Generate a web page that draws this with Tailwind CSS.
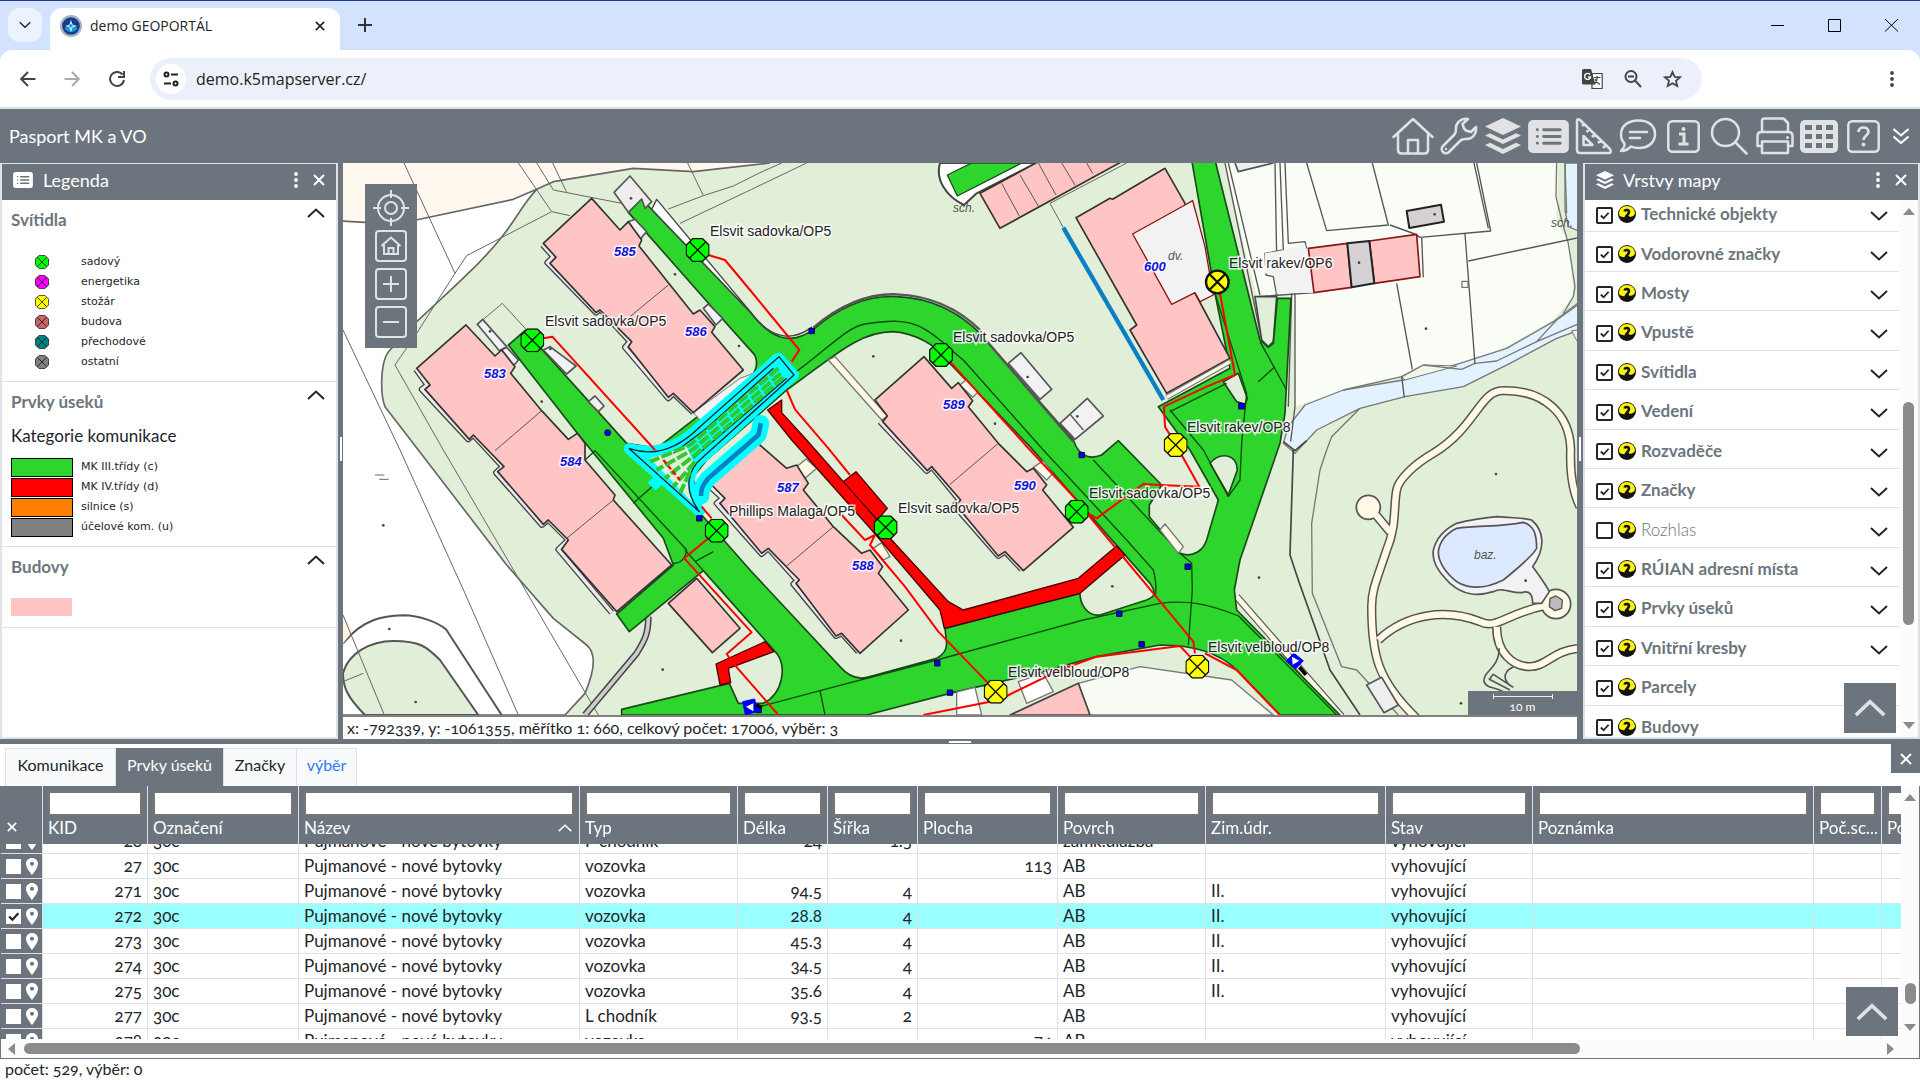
<!DOCTYPE html>
<html lang="cs">
<head>
<meta charset="utf-8">
<title>demo GEOPORTÁL</title>
<script src="https://cdn.jsdelivr.net/npm/@tailwindcss/browser@4"></script>
</head>
<body class="flex h-screen flex-col overflow-hidden bg-white font-['Lato',sans-serif] text-[17px] leading-6 text-[#212529] [font-variant-numeric:oldstyle-nums]">

<!-- Shared symbols -->
<svg class="hidden" aria-hidden="true">
  <symbol id="up" viewBox="0 0 18 10"><path d="M1 9 9 1.500 17 9" fill="none" stroke="currentColor" stroke-width="2"/></symbol>
  <symbol id="down" viewBox="0 0 18 10"><path d="M1 1 9 8.500 17 1" fill="none" stroke="currentColor" stroke-width="2"/></symbol>
  <symbol id="close" viewBox="0 0 12 12"><path d="m1 1 10 10M11 1 1 11" fill="none" stroke="currentColor" stroke-width="2"/></symbol>
  <symbol id="dots" viewBox="0 0 4 16"><g fill="currentColor"><circle cx="2" cy="2" r="1.900"/><circle cx="2" cy="8" r="1.900"/><circle cx="2" cy="14" r="1.900"/></g></symbol>
  <symbol id="layers" viewBox="0 0 36 36"><g fill="currentColor"><path d="M18 0 36 8.500 18 17 0 8.500z"/><path d="m0 17.500 5-2.300 13 6.200 13-6.200 5 2.300L18 26z"/><path d="m0 27 5-2.300 13 6.200 13-6.200 5 2.300L18 36z"/></g></symbol>
  <symbol id="list" viewBox="0 0 42 34"><rect width="42" height="34" rx="5" fill="currentColor"/><g stroke="#6c757d" stroke-width="3" stroke-linecap="round"><path d="M16 10h17M16 17h17M16 24h17M9.500 10h.1M9.500 17h.1M9.500 24h.1"/></g></symbol>
  <symbol id="tick" viewBox="0 0 12 12"><path d="m2 6 3 3 5.500-6" fill="none" stroke="currentColor" stroke-width="2"/></symbol>
  <symbol id="bulb" viewBox="0 0 18 18"><circle cx="9" cy="9" r="9" fill="#111"/><path d="M1 9C1 4 4.500 1 9 1s8 3 8 7.500c-1 3-3.500 3-5.500 3.500L9 13.500 5 12C3 12 1 11 1 9z" fill="#fcf40a"/><path d="M6.500 6.500C7 4.500 11 4.500 11 7c0 2.500-3 3-3.500 6l4-1" fill="none" stroke="#111" stroke-width="2.600"/></symbol>
  <symbol id="pin" viewBox="0 0 12 17"><path fill="#fff" fill-rule="evenodd" d="M6 0C2.500 0 0 2.500 0 6c0 4 6 11 6 11s6-7 6-11c0-3.500-2.500-6-6-6zm0 3.800a2 2 0 1 1 0 4 2 2 0 0 1 0-4z"/></symbol>
  <symbol id="lamp" viewBox="-36 -36 72 72"><path d="M-15-34H15L34-15V15L15 34H-15L-34 15V-15z" stroke="#111" stroke-width="4"/><path d="m-24-24 48 48M24-24l-48 48" fill="none" stroke="#111" stroke-width="4"/></symbol>
</svg>

<!-- Browser chrome -->
<header class="shrink-0 bg-[#d3e3fd] font-['Open_Sans',sans-serif] [font-variant-numeric:lining-nums]">
  <div class="flex h-[50px] items-end border-t border-[#1f3a93]">
    <button aria-label="Hledat karty" class="mb-2 ml-2 grid h-[34px] w-[34px] place-items-center rounded-xl bg-[#ecf2fe]"><svg class="h-2 w-3"><use href="#down"/></svg></button>
    <div class="ml-2 flex h-[42px] w-[290px] items-center rounded-t-xl bg-white px-3 pb-[6px]">
      <svg class="ml-[-2px] h-[22px] w-[22px]" viewBox="0 0 20 20"><circle cx="10" cy="10" r="9" fill="#123f8c" stroke="#aab3bd" stroke-width="2"/><path d="M4 12a7 7 0 0 0 12 0l-5-3z" fill="#179cd8"/><path d="m10 6 1 3 3 1-3 1-1 3-1-3-3-1 3-1z" fill="none" stroke="#cdeaff"/></svg>
      <span class="ml-2 flex-1 text-sm">demo GEOPORTÁL</span>
      <button aria-label="Zavřít kartu"><svg class="h-[10px] w-[10px]"><use href="#close"/></svg></button>
      <span class="w-[3px]"></span>
    </div>
    <button aria-label="Nová karta" class="mb-[18px] ml-[18px] text-[#333]"><svg class="h-[14px] w-[14px]" viewBox="0 0 14 14"><path d="M7 0v14M0 7h14" stroke="currentColor" stroke-width="2"/></svg></button>
    <div class="mb-[18px] ml-auto mr-[22px] flex items-center gap-11 text-black">
      <button aria-label="Minimalizovat"><svg class="h-[14px] w-[13px]" viewBox="0 0 13 14"><path d="M0 7.500h13" stroke="currentColor"/></svg></button>
      <button aria-label="Maximalizovat"><svg class="h-[14px] w-[13px]" viewBox="0 0 13 14"><path d="M.5 1.500h12v12H.5z" fill="none" stroke="currentColor"/></svg></button>
      <button aria-label="Zavřít"><svg class="h-[14px] w-[13px]" viewBox="0 0 13 14"><path d="m0 1 13 12.500M13 1 0 13.500" fill="none" stroke="currentColor"/></svg></button>
    </div>
  </div>
  <div class="flex h-[59px] items-center rounded-t-xl border-b-2 border-[#dde1dd] bg-white text-[#444]">
    <button aria-label="Zpět" class="ml-5"><svg class="h-4 w-4" viewBox="0 0 16 16"><path d="M15.500 8H1.500M8 1 1.200 8 8 15" fill="none" stroke="currentColor" stroke-width="2"/></svg></button>
    <button aria-label="Vpřed" class="ml-7 text-[#aaa]"><svg class="h-4 w-4" viewBox="0 0 16 16"><path d="M.5 8h14M8 1l6.800 7L8 15" fill="none" stroke="currentColor" stroke-width="2"/></svg></button>
    <button aria-label="Obnovit" class="ml-[29px]"><svg class="h-4 w-4" viewBox="0 0 16 16"><path d="M13.500 3.500A7 7 0 1 0 15 9M15 0v6H9" fill="none" stroke="currentColor" stroke-width="2"/></svg></button>
    <div class="ml-[25px] mr-[218px] flex h-[42px] flex-1 items-center rounded-full bg-[#ecf0fa]">
      <span class="ml-[6px] grid h-[30px] w-[30px] place-items-center rounded-full bg-white"><svg class="h-4 w-4" viewBox="0 0 16 16"><g fill="none" stroke="#222" stroke-width="2"><circle cx="3.500" cy="3.500" r="2"/><circle cx="12.500" cy="12.500" r="2"/><path d="M8 3.500h7M1 12.500h7"/></g></svg></span>
      <input aria-label="Adresa" value="demo.k5mapserver.cz/" class="ml-[10px] min-w-0 flex-1 bg-transparent text-base text-[#222] outline-none [font-variant-numeric:lining-nums]">
      <div class="mr-5 flex items-center gap-[21px]">
        <button aria-label="Přeložit"><svg class="h-5 w-[21px]" viewBox="0 0 21 20"><path d="M10 4.500h10.200v15H10z" fill="#fff" stroke="#444" stroke-width="1.200"/><path d="M1.500 0H9l4.500 15.500h-12A1.500 1.500 0 0 1 0 14V1.500A1.500 1.500 0 0 1 1.500 0z" fill="#444"/><path d="M8 5.500A3 3 0 1 0 8.600 8H6" fill="none" stroke="#fff" stroke-width="1.400"/><path d="M12 8.500h6.500M15.300 7v1.500c0 3-1.500 5-3 6.500M13 10c1 3 3 4.500 5 5.500" fill="none" stroke="#444" stroke-width="1.200"/></svg></button>
        <button aria-label="Lupa"><svg class="h-[18px] w-[18px]" viewBox="0 0 18 18"><g fill="none" stroke="#444" stroke-width="2"><circle cx="7" cy="6.500" r="5.500"/><path d="m11 10.500 6 6.500M4 6.500h6"/></g></svg></button>
        <button aria-label="Záložka"><svg class="h-[18px] w-[19px]" viewBox="0 0 19 18"><path d="m9.500 2 2.200 4.800 5.300.5-4 3.500 1.200 5.200-4.700-2.800L4.800 16 6 10.800 2 7.300l5.300-.5z" fill="none" stroke="#444" stroke-width="1.800"/></svg></button>
      </div>
    </div>
    <button aria-label="Nabídka" class="absolute right-[26px]"><svg class="h-[18px] w-1"><use href="#dots"/></svg></button>
  </div>
</header>

<!-- Application bar -->
<nav class="flex h-[54px] shrink-0 items-center bg-[#6c757d] pr-[11px] text-[#e0e2e4]">
  <h1 class="ml-[9px] flex-1 text-lg text-white">Pasport MK a VO</h1>
  <div class="flex items-center gap-[6px]">
    <button aria-label="Domů"><svg class="h-[38px] w-[42px]" viewBox="0 0 42 38"><g fill="none" stroke="currentColor" stroke-width="2.500" stroke-linejoin="round" stroke-linecap="round"><path d="M1.500 20 21 2l19.500 18M6 17v16q0 3.500 3.500 3.500h23q3.500 0 3.500-3.500V17"/><path d="M16 36V23h10v13"/></g></svg></button>
    <button aria-label="Nástroje"><svg class="h-[38px] w-[38px]" viewBox="0 0 38 38"><path d="M28 2c-7-1-13 4-12 11 0 2 0 3-2 5L3 29c-4 4 2 10 6 6l11-11c2-2 3-2 5-2 7 1 12-5 11-12l-5 5-5-1.500-2-2L22.500 7z" fill="none" stroke="currentColor" stroke-width="2.500" stroke-linejoin="round"/><circle cx="6" cy="32" r="1.200" fill="currentColor"/></svg></button>
    <button aria-label="Vrstvy"><svg class="h-9 w-[38px]"><use href="#layers"/></svg></button>
    <button aria-label="Legenda"><svg class="h-[33px] w-[41px]"><use href="#list"/></svg></button>
    <button aria-label="Měření"><svg class="h-[38px] w-[38px]" viewBox="0 0 38 38"><g fill="none" stroke="currentColor" stroke-width="2.500" stroke-linejoin="round"><path d="M2 4q0-3 3-1l30 29q2 4-1 4H5q-3 0-3-3zM8.500 19v9h9zM9 7 7 9M14.500 12l-3 3M20 17l-3 3M26 23l-3 3M31 28l-3 3"/></g></svg></button>
    <button aria-label="Komentáře"><svg class="h-[34px] w-[38px]" viewBox="0 0 38 34"><path d="M19.500 1.500C30 1.500 36 7 36 15s-6 14-16 14c-3 0-6-.500-8-1.500-3 3-6 4.500-10 4.500 2-2 4-5 3.500-7.500C3 22 2 19 2 15.500 2 7 9 1.500 19.500 1.500zM11 13h17M11 19h10" fill="none" stroke="currentColor" stroke-width="2.500" stroke-linejoin="round" stroke-linecap="round"/></svg></button>
    <button aria-label="Informace" class="mx-1"><svg class="h-[33px] w-[33px]" viewBox="0 0 33 33"><rect x="1.300" y="1.300" width="30.400" height="30.400" rx="4" fill="none" stroke="currentColor" stroke-width="2.500"/><path d="M12 14h5v9M11.500 24h10" fill="none" stroke="currentColor" stroke-width="3"/><circle cx="16.500" cy="9" r="2" fill="currentColor"/></svg></button>
    <button aria-label="Hledat" class="mr-[2px]"><svg class="h-[38px] w-[38px]" viewBox="0 0 38 38"><g fill="none" stroke="currentColor" stroke-width="2.500" stroke-linecap="round"><circle cx="15.500" cy="15.500" r="13.500"/><path d="m25.500 25.500 11 11"/></g></svg></button>
    <button aria-label="Tisk"><svg class="h-[38px] w-[38px]" viewBox="0 0 38 38"><g fill="none" stroke="currentColor" stroke-width="2.500" stroke-linejoin="round"><path d="M6 15V4q0-2.500 2.500-2.500h19L32 6v9M6 29H1.500V19q0-4 4-4h27q4 0 4 4v10H32M6 24.500h26V36H6z"/></g><circle cx="31.500" cy="20.500" r="1.500" fill="currentColor"/></svg></button>
    <button aria-label="Tabulka"><svg class="h-[33px] w-[38px]" viewBox="0 0 38 33"><rect width="38" height="33" rx="5" fill="currentColor"/><g fill="#6c757d"><path d="M5 5h7v5H5zM16 5h6v5h-6zM26 5h7v5h-7zM5 14h7v5H5zM16 14h6v5h-6zM26 14h7v5h-7zM5 23h7v5H5zM16 23h6v5h-6zM26 23h7v5h-7z"/></g></svg></button>
    <button aria-label="Nápověda" class="ml-[3px] mr-[7px]"><svg class="h-[33px] w-[33px]" viewBox="0 0 33 33"><rect x="1.300" y="1.300" width="30.400" height="30.400" rx="4" fill="none" stroke="currentColor" stroke-width="2.500"/><path d="M11.500 12c0-6 10-6 10 0 0 3.500-5 3.500-5 8" fill="none" stroke="currentColor" stroke-width="2.700"/><circle cx="16.500" cy="24.500" r="1.900" fill="currentColor"/></svg></button>
    <button aria-label="Více" class="text-white"><svg class="h-4 w-4" viewBox="0 0 16 16"><path d="m.5 1 7.500 6.500L15.500 1M.5 8.500 8 15l7.500-6.500" fill="none" stroke="currentColor" stroke-width="2"/></svg></button>
  </div>
</nav>

<main class="flex min-h-0 flex-1 bg-[#6c757d]">
  <!-- Legend -->
  <aside class="flex w-[338px] shrink-0 flex-col border-2 border-t border-[#dee2e6] bg-white">
    <div class="flex h-9 shrink-0 items-center bg-[#6c757d] px-[11px] pb-1 text-lg text-white">
      <svg class="h-4 w-5"><use href="#list"/></svg>
      <h2 class="ml-[10px] flex-1">Legenda</h2>
      <button aria-label="Možnosti"><svg class="h-4 w-1"><use href="#dots"/></svg></button>
      <button aria-label="Zavřít legendu" class="ml-[15px]"><svg class="h-3 w-3"><use href="#close"/></svg></button>
    </div>
    <section class="h-[182px] border-b border-[#dee2e6] px-[9px] pt-[8px]">
      <div class="flex justify-between pr-[2px]"><h3 class="font-bold text-[#6c757d]">Svítidla</h3><button aria-label="Sbalit"><svg class="mb-4 h-[10px] w-[18px]"><use href="#up"/></svg></button></div>
      <ul id="lamps" class="mt-[18px] font-['DejaVu_Sans',sans-serif] text-[11px] leading-5"></ul>
    </section>
    <section class="h-[165px] border-b border-[#dee2e6] px-[9px] pt-[8px]">
      <div class="flex justify-between pr-[2px]"><h3 class="font-bold text-[#6c757d]">Prvky úseků</h3><button aria-label="Sbalit"><svg class="mb-4 h-[10px] w-[18px]"><use href="#up"/></svg></button></div>
      <p class="mt-[8px]">Kategorie komunikace</p>
      <ul id="roads" class="mt-[9px] font-['DejaVu_Sans',sans-serif] text-[11px] leading-5"></ul>
    </section>
    <section class="h-[81px] border-b border-[#dee2e6] px-[9px] pt-[8px]">
      <div class="flex justify-between pr-[2px]"><h3 class="font-bold text-[#6c757d]">Budovy</h3><button aria-label="Sbalit"><svg class="mb-4 h-[10px] w-[18px]"><use href="#up"/></svg></button></div>
      <div class="mt-[17px] h-[18px] w-[61px] bg-[#ffc4c4]"></div>
    </section>
  </aside>
  <div class="flex w-[5px] shrink-0 items-center justify-center"><span class="mb-1 h-6 w-[2px] bg-white"></span></div>

  <!-- Map -->
  <section class="flex min-w-0 flex-1 flex-col bg-white">
    <div class="relative min-h-0 flex-1 overflow-hidden">
      <svg class="h-full w-full" viewBox="343 163 1234 552" preserveAspectRatio="xMidYMid slice" role="img" aria-label="Mapa">
        <rect x="343" y="163" width="1234" height="552" fill="#e2efd8"/>
        <g transform="translate(340 160) scale(.33333)" fill="none" stroke-linejoin="round">
          <!-- open ground, track -->
          <path d="M0 0H1290L1260 15 1060 35 880 25 640 65 590 88 520 118 228 180 75 187 0 183z" fill="#fff8ee"/>
          <path d="M0 183 75 187 228 180 520 118 590 88C550 130 540 160 490 225 440 290 380 345 300 420L230 485 150 570C120 600 120 700 135 740L235 870 500 1215 640 1375 740 1455C770 1480 765 1530 735 1600L675 1665H0z" fill="#fff" stroke="#666" stroke-width="5"/>
          <path d="M590 88 640 65 880 25 1060 35 1290 9" stroke="#666" stroke-width="5"/>
          <path d="M9 1450C70 1375 130 1368 190 1366 240 1367 290 1385 318 1408L485 1665" stroke="#555" stroke-width="6"/>
          <path d="M75 1665C20 1610 9 1580 9 1540 25 1480 90 1443 160 1443 240 1443 260 1460 300 1500L415 1665z" fill="#e2efd8" stroke="#555" stroke-width="6"/>
          <path d="M9 1365 40 1412 9 1450z" fill="#fff3e3"/>
          <g stroke="#666" stroke-width="3">
            <path d="M192 9 345 340 380 287 635 155 690 167M345 340 230 520 165 615 310 870 515 1220 775 1665M9 510 180 870 375 1300 535 1665M9 1365 133 1665M9 1565 70 1540"/>
            <path d="M535 9 635 155M590 9 640 90 845 130M638 9 680 97M1043 9 1090 107M985 147 1090 107 1180 78 1260 38 1325 9M1020 190 1235 88 1400 9"/>
            <path d="M410 495 487 430 560 510M105 945h28M118 958h28"/>
            <path d="M2130 130 2170 203M2130 130 2360 9"/>
          </g>
          <path d="M925 1370C925 1420 915 1440 890 1480L735 1665" stroke="#444" stroke-width="20"/><path d="M925 1370C925 1420 915 1440 890 1480L735 1665" stroke="#ccc" stroke-width="11"/>

          <!-- eastern plots and river -->
          <g transform="translate(2460 0)">
            <path d="M190 0 290 410 400 400 405 740 550 690 725 650 790 615 900 620 1040 560 1180 480 1240 410 1230 250 1190 190 1195 0z" fill="#f9fdf5"/>
            <path d="M1215 9H1260V215L1225 200 1215 150zM1260 425 1180 485 1040 565 900 610 730 660 550 690 435 735 385 800 370 850 405 880 470 810 600 745 735 710 910 680 1050 610 1190 535 1260 510z" fill="#e2f3ff" stroke="#777" stroke-width="4"/>
            <path d="M725 650 790 615 890 618 735 660zM1260 510 1235 512 1260 560z" fill="#f5f6ea" stroke="#777" stroke-width="3"/>
            <path d="M1190 9 1188 110 1205 180 1225 250 1245 380 1240 410 1210 460M1215 9 1220 160M550 690 725 650 790 615 905 628 945 610 1010 603 1130 545 1260 490M1130 545 1190 480 1260 430M600 745 515 830 500 870 480 930 455 1090 457 1300 545 1520 590 1530 715 1665" stroke="#777" stroke-width="4"/>
            <path d="M440 9 500 212 685 195 637 9M195 9 305 540M205 9 300 405M345 9 352 400M360 9 370 270 315 280 318 345 340 350 350 405M375 9 385 250 435 245 440 265M942 9 985 205M950 9 992 213 780 232 765 222 690 195M915 222 945 612M925 303 1260 232M710 370 757 628M290 410 465 398M405 400 405 740 390 860M395 400 385 740M785 230 790 352M725 650 733 712" stroke="#555" stroke-width="4"/>
            <path d="M372 270 435 250 460 398 350 400 345 345 315 340 315 280z" fill="#f2f2f2"/>
            <path d="M445 265 562 250 575 382 462 398zM628 243 770 223 780 350 643 370z" fill="#ffc4c4" stroke="#8c1515" stroke-width="5"/>
            <path d="M562 250 628 243 643 370 575 382zM740 153 843 134 852 185 748 204z" fill="#d4d0d3" stroke="#222" stroke-width="6"/>
            <path d="M225 9 235 35 340 9" fill="#eee" stroke="#555" stroke-width="5"/>
            <path d="M400 870 390 1185 415 1260 470 1415 510 1530 600 1665" stroke="#444" stroke-width="5"/>
            <path d="M370 845 405 872 440 842" fill="#e2f3ff" stroke="#444" stroke-width="5"/>
            <path d="M906 364h18v18h-18z" fill="#fff" stroke="#777" stroke-width="4"/>
            <path d="M285 410 305 540 325 560 340 545 350 410z" fill="#e2efd8" stroke="#444" stroke-width="5"/>
          </g>

          <!-- park paths and pool -->
          <g transform="translate(2460 840)">
            <path d="M1260 200C1235 150 1230 90 1232 30 1230-80 1150-150 1030-148 960-150 950-40 820 40 760 75 715 120 710 150 700 200 710 260 680 330 650 420 635 450 635 500 635 640 650 720 770 835M655 600C740 520 860 505 960 545 1010 570 1040 520 1155 497M1010 560C1010 640 1060 680 1110 680 1160 680 1180 630 1260 625M640 215 690 275" stroke="#555" stroke-width="28"/>
            <circle cx="625" cy="202" r="36" fill="#fff9e6" stroke="#555" stroke-width="5"/>
            <circle cx="1188" cy="492" r="44" fill="#fff9e6" stroke="#555" stroke-width="5"/>
            <path d="M1260 200C1235 150 1230 90 1232 30 1230-80 1150-150 1030-148 960-150 950-40 820 40 760 75 715 120 710 150 700 200 710 260 680 330 650 420 635 450 635 500 635 640 650 720 770 835M655 600C740 520 860 505 960 545 1010 570 1040 520 1155 497M1010 560C1010 640 1060 680 1110 680 1160 680 1180 630 1260 625M640 215 690 275" stroke="#fff9e6" stroke-width="19"/>
            <path d="M1170 475 1188 468 1207 480 1205 505 1185 512 1168 500z" fill="#bbb" stroke="#555" stroke-width="4"/>
            <path d="M890 250C930 240 960 235 1010 230 1060 235 1090 232 1115 240 1150 270 1160 320 1118 380 1140 410 1155 430 1168 455L1145 490 1118 490C1118 465 1110 450 1085 458 1050 460 1030 440 1000 455 950 470 910 465 870 430 840 400 815 370 820 330 830 290 860 265 890 250z" fill="#f2f2f4" stroke="#555" stroke-width="5"/>
            <path d="M890 265C950 255 1020 262 1090 247 1120 255 1130 280 1130 325 1115 350 1080 380 1030 420 990 440 940 455 890 425 860 400 835 370 835 335 840 300 860 280 890 265z" fill="#dce9ff" stroke="#555" stroke-width="5"/>
            <path d="M1018 625C1015 690 970 690 972 725 980 745 1000 740 1030 755M1060 680C1020 700 1035 730 1060 742M1060 742 1000 703 988 718 1050 750" stroke="#555" stroke-width="5"/>
            <path d="M620 735 665 712 715 795 672 818z" fill="#eee" stroke="#555" stroke-width="5"/>
            <path d="M230 470 545 830" stroke="#555" stroke-width="22"/><path d="M230 470 545 830" stroke="#fff9e6" stroke-width="15"/>
          </g>

          <!-- roads -->
          <path fill="#2ed52c" fill-rule="evenodd" stroke="#1b4a1a" stroke-width="5" d="M905 117 1230 455C1290 535 1350 560 1420 508 1500 440 1580 405 1670 410 1790 415 1870 470 1920 520L2200 840C2220 900 2260 895 2285 885L2335 842 2465 975 2428 1035 2428 1070 2520 1180C2560 1195 2590 1170 2600 1140L2635 1020 2550 870 2455 740 2670 625 2625 400 2555 0H2625L2760 540 2785 562 2800 550 2812 415H2853L2835 760 2820 850 2700 1200 2683 1290 2690 1350 3000 1665H2820L2690 1530C2640 1480 2560 1455 2460 1455L2270 1490 2090 1540 1850 1595 1580 1665H845V1648L1168 1570 1195 1630 1270 1630C1330 1600 1340 1520 1310 1480L1090 1232 868 1415 830 1362 1000 1215 970 1135 712 820 505 555 555 512 860 850 950 865 1240 640C1255 620 1250 590 1240 580L1110 435 865 157z
            M1340 690C1470 600 1550 515 1660 515 1730 520 1790 560 1810 590L2070 860 2430 1270C2450 1300 2445 1310 2420 1320L2280 1365C2240 1370 2220 1330 2220 1300L1815 1405 1820 1450C1820 1480 1800 1490 1790 1495L1590 1550C1560 1560 1530 1555 1500 1520L1230 1230 1085 1065 1060 950 1100 900z
            M2650 665 2695 640 2722 715 2715 733 2690 725zM2610 910C2640 875 2690 880 2692 930L2665 1005z"/>
          <path d="M1920 520 2200 845M1420 503C1500 435 1580 400 1670 403 1790 408 1870 460 1922 512" stroke="#555" stroke-width="7"/>
          <path d="M950 118 1260 490C1300 532 1360 545 1415 502 1350 548 1290 535 1230 455L935 148z" stroke="#444" stroke-width="4" fill="#fff"/>
          <g stroke="#0a4a0a" stroke-width="4">
            <path d="M1335 660C1450 580 1520 500 1575 492 1650 480 1700 480 1740 500 1800 530 1830 570 1870 600L2110 870 2360 1140 2440 1230C2450 1270 2450 1290 2445 1310"/>
            <path d="M2260 900 2520 1180 2555 1210 2557 1290 2545 1455M2230 1380 2460 1330C2540 1320 2600 1330 2696 1368L2990 1665M1260 1640 1440 1592 1790 1500 2230 1380M1440 1592 1455 1665"/>
            <path d="M735 900 765 872 1040 1170C1035 1200 1020 1210 1000 1210M880 1030 970 950M1065 1205 1120 1175M1035 1170 1090 1232M2625 400 2720 700 2705 850 2700 960 2665 1010M2760 545 2840 690M2755 665 2805 620M2490 750 2590 870 2665 1010M2490 755 2660 670"/>
          </g>
          <!-- courtyard bits -->
          <path d="M822 97 870 48 935 125 915 145 905 117 865 157z" fill="#eee" stroke="#555" stroke-width="5"/>
          <path d="M865 185 885 178 920 215 900 238zM1090 445 1105 432 1148 475 1128 495zM485 570 500 562 535 600 520 618zM412 493 428 478 500 560 478 572zM610 570 630 560 708 618 680 642zM745 725 765 708 792 738 775 755zM2005 610 2043 578 2135 688 2100 718zM2160 790 2242 715 2290 768 2205 838z" fill="#f2f2f4" stroke="#555" stroke-width="5"/>
          <path d="M2192 765 2230 810" stroke="#555" stroke-width="4"/>
          <path d="M1465 600 1485 590 1642 768 1625 780zM1860 675 1878 660 1915 695 1898 712zM1365 925 1398 897 1430 925 1395 955zM1600 1165 1625 1148 1650 1190 1630 1200zM2080 922 2110 902 2138 940 2120 960zM2460 1110 2475 1092 2530 1160 2515 1180z" fill="#fff9e6" stroke="#777" stroke-width="4"/>
          <path d="M1800 9C1785 60 1820 110 1872 135L1910 100 2090 9z" fill="#fff" stroke="#444" stroke-width="6"/>
          <path d="M1822 45 1895 9H2045L1852 108z" fill="#2ed52c" stroke="#1b4a1a" stroke-width="4"/>
          <path d="M2215 1570 2400 1520 2675 1560 2800 1665H2250z" fill="#f8fcf5" stroke="#777" stroke-width="4"/>
          <path d="M1850 1596 1905 1582 1925 1665H1850zM2035 1565 2110 1540 2140 1595 2060 1630z" fill="#fff" stroke="#777" stroke-width="4"/>
          <path d="M2010 1665 2215 1570 2250 1665z" fill="#ffc4c4" stroke="#444" stroke-width="5"/>

          <!-- buildings -->
          <g stroke="#444" stroke-width="18"><path d="M608 255 640 290 622 308 768 458 780 448 870 545 855 562 985 715 1000 700 1060 758"/><path d="M228 628 262 675 245 688 385 838 400 825 488 920 468 938 606 1095 625 1080 685 1140 655 1168 815 1358"/><path d="M1110 980 1148 1015 1130 1030 1265 1182 1285 1165 1372 1262 1360 1272 1488 1428 1505 1420 1555 1475"/><path d="M1620 785 1760 933 1775 920 1858 1020 1843 1037 1975 1188 1995 1175 2045 1228"/></g>
          <g stroke="#eceaec" stroke-width="10"><path d="M608 255 640 290 622 308 768 458 780 448 870 545 855 562 985 715 1000 700 1060 758"/><path d="M228 628 262 675 245 688 385 838 400 825 488 920 468 938 606 1095 625 1080 685 1140 655 1168 815 1358"/><path d="M1110 980 1148 1015 1130 1030 1265 1182 1285 1165 1372 1262 1360 1272 1488 1428 1505 1420 1555 1475"/><path d="M1620 785 1760 933 1775 920 1858 1020 1843 1037 1975 1188 1995 1175 2045 1228"/></g>
          <path d="M1060 758 1200 655 1240 640 1090 790z" fill="#f2f2f4" stroke="#777" stroke-width="3"/>
          <g fill="#ffc4c4" stroke="#333" stroke-width="5">
            <path d="M755 115 840 210 865 185 905 240 897 258 1060 462 1080 450 1125 500 1115 517 1210 630 1060 758 1000 700 985 712 865 560 875 545 780 450 768 458 630 310 648 292 610 250z"/>
            <path d="M378 495 465 588 485 570 525 620 512 640 605 752 685 838 712 820 735 850 735 900 825 1005 820 1020 995 1215 830 1355 665 1168 685 1140 625 1080 610 1093 473 935 492 920 400 825 388 838 255 688 270 675 230 625z"/>
            <path d="M1245 842 1340 925 1370 915 1405 970 1390 990 1480 1100 1565 1180 1590 1170 1628 1220 1615 1240 1705 1350 1560 1480 1505 1420 1488 1428 1368 1270 1378 1260 1285 1165 1265 1180 1140 1030 1155 1015 1115 975z"/>
            <path d="M1752 590 1835 685 1855 668 1898 722 1885 740 1975 850 2060 935 2080 925 2120 975 2108 990 2200 1102 2050 1232 1995 1175 1975 1188 1848 1035 1862 1020 1775 920 1762 932 1628 785 1642 768 1605 720z"/>
            <path d="M2208 173 2310 115 2318 118 2475 25 2535 130 2560 390 2670 595 2480 700 2370 510 2390 495z"/>
            <path d="M985 1330 1070 1255 1200 1405 1117 1478zM1920 100 2095 5H2345L1980 205z"/>
          </g>
          <path d="M985 375 870 470M605 752 465 872M820 1020 680 1135M1480 1100 1338 1220M1975 850 1830 973M1985 70 2038 168M2040 45 2095 138M2095 9 2148 105M2165 9 2205 75M2240 9 2258 40" stroke="#555" stroke-width="3"/>
          <path d="M2378 222 2535 135 2558 122 2595 260 2620 405 2580 425 2565 398 2495 433z" fill="#f2f2f2" stroke="#8c1515" stroke-width="4"/>
          <path d="M2480 712 2670 605" stroke="#777" stroke-width="16"/><path d="M2480 712 2670 605" stroke="#fff9e6" stroke-width="10"/>

          <!-- red roads -->
          <path d="M1283 750 1325 720V758L1400 840 1510 965 1548 935 1642 1045 1612 1080 1655 1140 1825 1325 1870 1350 2215 1255 2330 1158 2355 1185 2220 1300 1813 1405 1800 1350 1595 1110 1355 840zM1128 1512 1275 1445 1302 1475 1165 1525 1172 1568 1140 1575z" fill="#f00" stroke="#400" stroke-width="4"/>
          <path d="M1510 965 1612 1080" stroke="#400" stroke-width="4"/>

          <!-- selected elements -->
          <path d="M1315 595 1080 800C1010 870 940 885 868 866L1078 1052C1030 990 1040 930 1090 890L1360 645zM935 980 970 945" fill="#0ff" stroke="#0ff" stroke-width="34"/>
          <path d="M930 895 1060 1030C1035 980 1040 940 1060 905L1040 860z" fill="#e2efd8"/>
          <path d="M1263 790 1255 825 1105 955C1085 980 1083 990 1083 1008" stroke="#0ff" stroke-width="50" stroke-linecap="round"/>
          <path d="M1263 790 1255 825 1105 955C1085 980 1083 990 1083 1008" stroke="#0a80c4" stroke-width="14"/>
          <path d="M1317 590 1080 800C1010 870 940 890 868 866L1078 1055C1030 990 1040 930 1090 890L1362 645zM1300 625 1100 805 1000 880M1340 655 1130 835 1060 895" stroke="#123" stroke-width="4"/>
          <path d="M1315 625 1050 855 930 905M1322 640 1060 868 950 930M1330 652 1065 885 975 955M1065 905 1000 980M1050 935 1020 1000" stroke="#30c830" stroke-width="12" stroke-dasharray="34 7"/>
          <path d="M970 900 1020 960" stroke="#f00" stroke-width="7" stroke-dasharray="14 8"/>

          <!-- cables -->
          <g stroke="#f00" stroke-width="6">
            <path d="M1105 285 1155 300 1230 390 1378 570 1355 605M1340 690 1365 748 1465 865 1530 945M1505 1065 1575 1140 1605 1125 1590 1155 1695 1280 1795 1415 1945 1570"/>
            <path d="M610 535 637 530 945 870M1085 1040 1115 1075M1105 1135 1033 1195 1235 1417 1160 1482 1180 1510 1315 1665"/>
            <path d="M1830 605 2070 870 2210 1020M2245 1060 2270 1075 2410 972 2460 975 2578 980 2525 885M2245 1065 2490 1360 2560 1445 2565 1480M2000 1608 2160 1530 2270 1490 2520 1458 2550 1490M2595 1480 2690 1530 2820 1665M1750 1665 1950 1625"/>
            <path d="M2640 400 2685 645 2600 680 2472 740 2475 800 2490 825"/>
          </g>
          <path d="M2170 203 2470 720" stroke="#0a80c4" stroke-width="13"/>

          <!-- lamps -->
          <g fill="#0f0"><use href="#lamp" x="1037" y="234" width="72" height="72"/><use href="#lamp" x="541" y="505" width="72" height="72"/><use href="#lamp" x="1767" y="549" width="72" height="72"/><use href="#lamp" x="1601" y="1066" width="72" height="72"/><use href="#lamp" x="2174" y="1019" width="72" height="72"/><use href="#lamp" x="1094" y="1076" width="72" height="72"/></g>
          <g fill="#ff0"><use href="#lamp" x="1931" y="1559" width="72" height="72"/><use href="#lamp" x="2536" y="1484" width="72" height="72"/><use href="#lamp" x="2471" y="819" width="72" height="72"/></g>
          <circle cx="2632" cy="366" r="34" fill="#ff0" stroke="#111" stroke-width="7"/><path d="m2608 342 48 48M2656 342l-48 48" stroke="#111" stroke-width="7"/>
          <g fill="#00f" stroke="#003" stroke-width="3">
            <circle cx="803" cy="818" r="9"/><path d="M1070 1067h16v16h-16zM1407 505h16v16h-16zM1902 527h16v16h-16zM2217 877h16v16h-16zM2696 730h17v17h-17zM2330 1353h16v16h-16zM2397 1445h16v16h-16zM1784 1502h16v16h-16zM1822 1590h16v16h-16zM1248 1642h16v16h-16zM2535 1212h16v16h-16z"/>
            <path d="m1208 1625 36-8 8 38-36 9zM2862 1480l28 22-22 24-30-23z" stroke="#00f"/>
          </g>
          <path d="m1218 1640 22-10v24zM2856 1490l22 12-20 12z" fill="#fff"/>
          <path d="m2878 1522 20 22M1248 1635l18 8" stroke="#000" stroke-width="11"/>
          <g fill="#444"><circle cx="1005" cy="343" r="4"/><circle cx="1197" cy="558" r="4"/><circle cx="605" cy="725" r="4"/><circle cx="873" cy="115" r="4"/><circle cx="450" cy="514" r="4"/><circle cx="631" cy="567" r="4"/><circle cx="130" cy="1096" r="4"/><circle cx="148" cy="1407" r="4"/><circle cx="227" cy="1626" r="4"/><circle cx="968" cy="1529" r="4"/><circle cx="1600" cy="589" r="4"/><circle cx="1965" cy="791" r="4"/><circle cx="2063" cy="651" r="4"/><circle cx="2212" cy="769" r="4"/><circle cx="1683" cy="1442" r="4"/><circle cx="2317" cy="1279" r="4"/><circle cx="3057" cy="308" r="4"/><circle cx="3284" cy="163" r="4"/><circle cx="3258" cy="506" r="4"/><circle cx="2757" cy="1253" r="4"/><circle cx="3468" cy="942" r="4"/><circle cx="3363" cy="1630" r="4"/><circle cx="3557" cy="1262" r="4"/></g>
        </g>
        <g class="font-['Liberation_Sans',sans-serif] text-[14px]" fill="#222" stroke="#fff" stroke-opacity=".8" stroke-width="3" paint-order="stroke">
          <text x="545" y="326">Elsvit sadovka/OP5</text><text x="710" y="236">Elsvit sadovka/OP5</text><text x="953" y="342">Elsvit sadovka/OP5</text><text x="898" y="513">Elsvit sadovka/OP5</text><text x="1089" y="498">Elsvit sadovka/OP5</text><text x="729" y="516">Phillips Malaga/OP5</text><text x="1008" y="677">Elsvit velbloud/OP8</text><text x="1208" y="652">Elsvit velbloud/OP8</text><text x="1229" y="268">Elsvit rakev/OP6</text><text x="1187" y="432">Elsvit rakev/OP8</text>
        </g>
        <g class="font-['Liberation_Sans',sans-serif] text-[13px] font-bold italic" fill="#11d" stroke="#fff" stroke-opacity=".8" stroke-width="3" paint-order="stroke">
          <text x="614" y="256">585</text><text x="685" y="336">586</text><text x="484" y="378">583</text><text x="560" y="466">584</text><text x="777" y="492">587</text><text x="852" y="570">588</text><text x="943" y="409">589</text><text x="1014" y="490">590</text><text x="1144" y="271">600</text>
        </g>
        <g class="font-['Liberation_Sans',sans-serif] text-[12px] italic" fill="#555"><text x="1474" y="559">baz.</text><text x="1168" y="260">dv.</text><text x="953" y="212">sch.</text><text x="1551" y="227">sch.</text></g>
      </svg>
      <div class="absolute left-[22px] top-[21px] flex flex-col items-center gap-[6px] bg-[#6c757d] px-[10px] pb-[10px] pt-2 text-[#e0e2e4]">
        <button aria-label="Moje poloha"><svg class="h-8 w-8 overflow-visible" viewBox="2 2 32 32"><g fill="none" stroke="currentColor" stroke-width="2"><circle cx="18" cy="18" r="13"/><circle cx="18" cy="18" r="6"/><path d="M18 0v8M18 28v8M0 18h8M28 18h8"/></g></svg></button>
        <button aria-label="Výchozí pohled" class="grid h-8 w-8 place-items-center rounded border-2 border-[#e0e2e4]"><svg class="h-5 w-5" viewBox="0 0 20 20"><path d="M.5 10 10 1.500 19.500 10M3 9v9h14V9M7.500 18v-6h5v6" fill="none" stroke="currentColor" stroke-width="2"/></svg></button>
        <button aria-label="Přiblížit" class="grid h-8 w-8 place-items-center rounded border-2 border-[#e0e2e4]"><svg class="h-4 w-4" viewBox="0 0 16 16"><path d="M8 0v16M0 8h16" stroke="currentColor" stroke-width="2"/></svg></button>
        <button aria-label="Oddálit" class="grid h-8 w-8 place-items-center rounded border-2 border-[#e0e2e4]"><svg class="h-4 w-4" viewBox="0 0 16 16"><path d="M0 8h16" stroke="currentColor" stroke-width="2"/></svg></button>
      </div>
      <div class="absolute bottom-0 right-0 flex h-6 w-[109px] flex-col items-center bg-[#6c757d] pt-[3px] text-xs leading-4 text-white">
        <div class="relative h-[5px] w-[60px] shrink-0 border-x border-[#eee]"><div class="mt-[2px] h-px bg-[#eee]"></div></div>10 m
      </div>
    </div>
    <div class="h-[24px] shrink-0 border-t-2 border-[#808080] pl-1 text-base leading-[22px]">x: -792339, y: -1061355, měřítko 1: 660, celkový počet: 17006, výběr: 3</div>
  </section>
  <div class="flex w-[6px] shrink-0 items-center justify-center"><span class="mb-1 h-6 w-[2px] bg-white"></span></div>

  <!-- Map layers -->
  <aside class="relative flex w-[337px] shrink-0 flex-col border-2 border-t border-[#dee2e6] bg-white">
    <div class="z-10 flex h-9 shrink-0 items-center bg-[#6c757d] px-[11px] pb-1 text-lg text-white">
      <svg class="h-[18px] w-[18px]"><use href="#layers"/></svg>
      <h2 class="ml-[9px] flex-1">Vrstvy mapy</h2>
      <button aria-label="Možnosti"><svg class="h-4 w-1"><use href="#dots"/></svg></button>
      <button aria-label="Zavřít vrstvy" class="ml-[15px]"><svg class="h-3 w-3"><use href="#close"/></svg></button>
    </div>
    <div class="flex min-h-0 flex-1 overflow-hidden">
      <ul id="layerlist" class="-mt-[7px] grid h-[552px] flex-1 grid-rows-14"></ul>
      <div class="flex w-[19px] flex-col items-center bg-[#fcfcfc] pb-2 pt-2 text-[#8b8b8b]">
        <svg class="h-[7px] w-3" viewBox="0 0 12 7"><path d="M6 0l6 7H0z" fill="currentColor"/></svg>
        <span class="mt-[187px] h-[223px] w-[11px] rounded-full bg-[#8b8b8b]"></span>
        <svg class="mt-auto h-[7px] w-3" viewBox="0 0 12 7"><path d="M6 7 0 0h12z" fill="currentColor"/></svg>
      </div>
    </div>
    <button aria-label="Nahoru" class="absolute bottom-1 right-[22px] grid h-[50px] w-[52px] place-items-center bg-[#6c757d] text-[#dee2e6]"><svg class="h-[18px] w-8"><use href="#up"/></svg></button>
  </aside>
</main>

<!-- Attribute table -->
<section class="relative flex h-[341px] shrink-0 flex-col">
  <div class="flex h-[5px] shrink-0 items-center justify-center bg-[#6c757d]"><span class="h-[2px] w-[22px] bg-white"></span></div>
  <button aria-label="Zavřít tabulku" class="absolute right-0 top-[5px] grid h-[29px] w-[29px] place-items-center bg-[#6c757d] text-white"><svg class="h-3 w-3"><use href="#close"/></svg></button>
  <div role="tablist" class="ml-[5px] mt-1 flex h-[38px] shrink-0 text-base">
    <button role="tab" class="w-[111px] border border-b-0 border-[#dee2e6] bg-[#f8f9fa] pb-[5px]">Komunikace</button>
    <button role="tab" aria-selected="true" class="w-[107px] bg-[#6c757d] pb-[5px] text-white">Prvky úseků</button>
    <button role="tab" class="w-[74px] border border-b-0 border-[#dee2e6] bg-[#f8f9fa] pb-[5px]">Značky</button>
    <button role="tab" class="w-[60px] border border-b-0 border-l-0 border-[#dee2e6] bg-[#f8f9fa] pb-[5px] text-[#2f7bf6]">výběr</button>
  </div>
  <div class="flex h-[273px] shrink-0 flex-col border border-t-0 border-[#6c757d]">
    <div class="flex min-h-0 flex-1">
      <div class="min-w-0 flex-1 overflow-hidden">
        <table class="-mt-[15px] w-[1958px] table-fixed border-separate border-spacing-0 text-left">
          <colgroup id="cols"></colgroup>
          <thead class="sticky top-0 z-10"><tr id="heads" class="h-[58px] bg-[#6c757d] text-white"></tr></thead>
          <tbody id="rows"></tbody>
        </table>
      </div>
      <div class="flex w-[18px] shrink-0 flex-col items-center bg-[#fcfcfc] pb-2 pt-2 text-[#8b8b8b]">
        <svg class="h-[7px] w-3" viewBox="0 0 12 7"><path d="M6 0l6 7H0z" fill="currentColor"/></svg>
        <span class="mt-auto h-[21px] w-[11px] rounded-full bg-[#8b8b8b]"></span>
        <svg class="mt-5 h-[7px] w-3" viewBox="0 0 12 7"><path d="M6 7 0 0h12z" fill="currentColor"/></svg>
      </div>
    </div>
    <div class="flex h-[19px] shrink-0 items-center bg-[#fcfcfc] pl-[7px] pr-[25px] text-[#8b8b8b]">
      <svg class="h-3 w-[7px]" viewBox="0 0 7 12"><path d="M7 0v12L0 6z" fill="currentColor"/></svg>
      <span class="ml-[9px] h-[11px] w-33/40 rounded-full bg-[#8b8b8b]"></span>
      <svg class="ml-auto h-3 w-[7px]" viewBox="0 0 7 12"><path d="M0 0v12l7-6z" fill="currentColor"/></svg>
    </div>
  </div>
  <div class="h-[21px] pl-[5px] text-base leading-5">počet: 529, výběr: 0</div>
  <button aria-label="Nahoru" class="absolute bottom-11 right-[22px] z-20 grid h-[49px] w-[52px] place-items-center bg-[#6c757d] text-[#dee2e6]"><svg class="h-[18px] w-8"><use href="#up"/></svg></button>
</section>

<script>
const put = (id, html) => document.getElementById(id).innerHTML = html;

put('lamps', [['sadový', '#00ff00'], ['energetika', '#ff00ff'], ['stožár', '#ffff00'], ['budova', '#c86464'], ['přechodové', '#008080'], ['ostatní', '#808080']]
  .map(([t, c]) => `<li class="flex items-center"><svg class="ml-6 mr-8 h-[14px] w-[14px]" style="fill:${c}"><use href="#lamp"/></svg>${t}</li>`).join(''));

put('roads', [['MK III.třídy (c)', '#2ed52c'], ['MK IV.třídy (d)', '#ff0000'], ['silnice (s)', '#ff8000'], ['účelové kom. (u)', '#808080']]
  .map(([t, c]) => `<li class="flex h-5 items-center"><span class="mr-2 h-[19px] w-[62px] border border-black" style="background:${c}"></span>${t}</li>`).join(''));

put('layerlist', ['Technické objekty', 'Vodorovné značky', 'Mosty', 'Vpustě', 'Svítidla', 'Vedení', 'Rozvaděče', 'Značky', 'Rozhlas', 'RÚIAN adresní místa', 'Prvky úseků', 'Vnitřní kresby', 'Parcely', 'Budovy']
  .map((t, i) => {
    const off = t === 'Rozhlas';
    return `<li class="flex items-center border-b border-[#dee2e6] pl-[11px] pr-[11px] pt-1">
      <span class="mt-[2px] grid place-items-center"><input id="l${i}" type="checkbox" ${off ? '' : 'checked'} class="col-start-1 row-start-1 h-[17px] w-[17px] appearance-none rounded-[2px] border-2 border-[#212529]">${off ? '' : '<svg class="pointer-events-none col-start-1 row-start-1 h-[11px] w-[11px]"><use href="#tick"/></svg>'}</span>
      <svg class="ml-[5px] h-[18px] w-[18px]"><use href="#bulb"/></svg>
      <label for="l${i}" class="ml-[5px] flex-1 text-[#6c757d] ${off ? 'font-light' : 'font-bold'}">${t}</label>
      ${i < 12 ? '<button aria-label="Rozbalit" class="mt-1"><svg class="h-[10px] w-[18px]"><use href="#down"/></svg></button>' : ''}</li>`;
  }).join(''));

const cols = [['', 42], ['KID', 105], ['Označení', 151], ['Název', 281], ['Typ', 158], ['Délka', 90], ['Šířka', 90], ['Plocha', 140], ['Povrch', 148], ['Zim.údr.', 180], ['Stav', 147], ['Poznámka', 281], ['Poč.sc...', 68], ['Počet', 77]];
put('cols', cols.map(c => `<col style="width:${c[1]}px">`).join(''));
put('heads', cols.map(([t], i) => i === 0
  ? '<th class="border-r border-[#dee2e6] pb-[12px] pl-[6px] align-bottom"><button aria-label="Zrušit výběr" class="block"><svg class="h-[10px] w-[10px]"><use href="#close"/></svg></button></th>'
  : `<th class="border-r border-[#dee2e6] px-[5px] pt-[5px] align-top font-normal"><input aria-label="Filtr ${t}" class="block h-[25px] w-full border-2 border-[#767676] bg-white"><span class="flex items-center justify-between whitespace-nowrap leading-6">${t}${t === 'Název' ? '<svg class="mr-[2px] h-2 w-[14px]"><use href="#up"/></svg>' : ''}</span></th>`).join(''));

const rows = [
  ['26', 'P chodník', '24', '1.5', '', 'zámk.dlažba', ''],
  ['27', 'vozovka', '', '', '113', 'AB', ''],
  ['271', 'vozovka', '94.5', '4', '', 'AB', 'II.'],
  ['272', 'vozovka', '28.8', '4', '', 'AB', 'II.'],
  ['273', 'vozovka', '45.3', '4', '', 'AB', 'II.'],
  ['274', 'vozovka', '34.5', '4', '', 'AB', 'II.'],
  ['275', 'vozovka', '35.6', '4', '', 'AB', 'II.'],
  ['277', 'L chodník', '93.5', '2', '', 'AB', ''],
  ['278', 'vozovka', '', '', '74', 'AB', '']];
put('rows', rows.map(([kid, typ, del, sir, plo, pov, zim]) => {
  const on = kid === '272';
  const cells = [kid, '30c', 'Pujmanové - nové bytovky', typ, del, sir, plo, pov, zim, 'vyhovující', '', '', ''];
  return `<tr class="h-[25px] ${on ? 'bg-[#99ffff]' : 'bg-white'}"><td class="border-b border-r border-[#dee2e6] bg-[#6c757d] p-0"><span class="flex items-center gap-[5px] pl-[5px]"><span class="grid place-items-center"><input type="checkbox" aria-label="Vybrat ${kid}" ${on ? 'checked' : ''} class="col-start-1 row-start-1 h-[15px] w-[15px] appearance-none bg-white">${on ? '<svg class="pointer-events-none col-start-1 row-start-1 h-[13px] w-[13px]"><use href="#tick"/></svg>' : ''}</span><svg class="h-[17px] w-3"><use href="#pin"/></svg></span></td>`
    + cells.map((c, i) => `<td class="border-b border-r border-[#dee2e6] px-[5px] py-0 leading-6 whitespace-nowrap ${[0, 4, 5, 6].includes(i) ? 'text-right' : ''}">${c}</td>`).join('') + '</tr>';
}).join(''));
</script>
</body>
</html>
